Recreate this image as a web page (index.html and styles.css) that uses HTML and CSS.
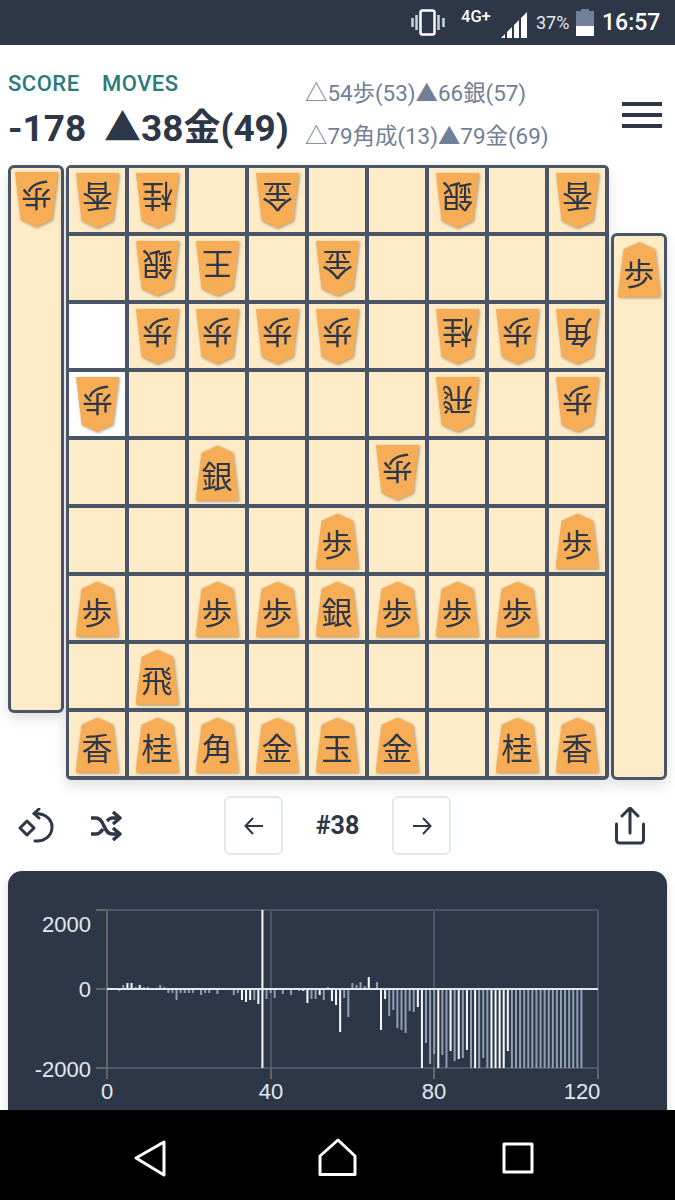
FILE: index.html
```html
<!DOCTYPE html>
<html lang="ja">
<head>
<meta charset="utf-8">
<title>Shogi</title>
<link rel="stylesheet" href="styles.css">
</head>
<body>
<div class="screen">
  <div class="status">
    <svg class="ic-vib" width="36" height="28" viewBox="0 0 36 28"><rect x="9.5" y="1.5" width="14" height="24" rx="2" fill="none" stroke="#fff" stroke-width="2.5"/><path d="M1.5 9v9M5.5 6v15M27.5 6v15M32.5 9v9" stroke="#cbd5e0" stroke-width="2.5" fill="none"/></svg>
    <span class="net">4G+</span>
    <svg class="ic-sig" width="26" height="26" viewBox="0 0 26 26"><path d="M0 26l4-4v4zM6 20l5-5v11H6zM13 13l5-5v18h-5zM20 6l6-6v26h-6z" fill="#fff"/></svg>
    <span class="pct">37%</span>
    <svg class="ic-bat" width="18" height="27" viewBox="0 0 18 27"><path d="M5 0h8v2h5v25H0V2h5z" fill="#718096"/><rect y="17" width="18" height="10" fill="#fff"/></svg>
    <span class="clock">16:57</span>
  </div>

  <main class="main">
    <header class="head">
      <div class="summary">
        <span class="label">SCORE</span>
        <span class="label">MOVES</span>
        <span class="big">-178</span>
        <span class="big big-move">▲38金(49)</span>
      </div>
      <div class="alts">
        <div>△54歩(53)▲66銀(57)</div>
        <div>△79角成(13)▲79金(69)</div>
      </div>
      <svg class="menu" width="40" height="28" viewBox="0 0 40 28"><path d="M0 3h40M0 14h40M0 25h40" stroke="#2d3748" stroke-width="4"/></svg>
    </header>

    <section class="play">
      <div class="stand stand-l"><div class="sp"><b class="p g">歩</b></div></div>
      <div class="board">
        <div class="c"><div class="sp"><b class="p g">香</b></div></div><div class="c"><div class="sp"><b class="p g">桂</b></div></div><div class="c"></div><div class="c"><div class="sp"><b class="p g">金</b></div></div><div class="c"></div><div class="c"></div><div class="c"><div class="sp"><b class="p g">銀</b></div></div><div class="c"></div><div class="c"><div class="sp"><b class="p g">香</b></div></div>

        <div class="c"></div><div class="c"><div class="sp"><b class="p g">銀</b></div></div><div class="c"><div class="sp"><b class="p g">王</b></div></div><div class="c"></div><div class="c"><div class="sp"><b class="p g">金</b></div></div><div class="c"></div><div class="c"></div><div class="c"></div><div class="c"></div>

        <div class="c w"></div><div class="c"><div class="sp"><b class="p g">歩</b></div></div><div class="c"><div class="sp"><b class="p g">歩</b></div></div><div class="c"><div class="sp"><b class="p g">歩</b></div></div><div class="c"><div class="sp"><b class="p g">歩</b></div></div><div class="c"></div><div class="c"><div class="sp"><b class="p g">桂</b></div></div><div class="c"><div class="sp"><b class="p g">歩</b></div></div><div class="c"><div class="sp"><b class="p g">角</b></div></div>

        <div class="c w"><div class="sp"><b class="p g">歩</b></div></div><div class="c"></div><div class="c"></div><div class="c"></div><div class="c"></div><div class="c"></div><div class="c"><div class="sp"><b class="p g">飛</b></div></div><div class="c"></div><div class="c"><div class="sp"><b class="p g">歩</b></div></div>

        <div class="c"></div><div class="c"></div><div class="c"><div class="sp"><b class="p">銀</b></div></div><div class="c"></div><div class="c"></div><div class="c"><div class="sp"><b class="p g">歩</b></div></div><div class="c"></div><div class="c"></div><div class="c"></div>

        <div class="c"></div><div class="c"></div><div class="c"></div><div class="c"></div><div class="c"><div class="sp"><b class="p">歩</b></div></div><div class="c"></div><div class="c"></div><div class="c"></div><div class="c"><div class="sp"><b class="p">歩</b></div></div>

        <div class="c"><div class="sp"><b class="p">歩</b></div></div><div class="c"></div><div class="c"><div class="sp"><b class="p">歩</b></div></div><div class="c"><div class="sp"><b class="p">歩</b></div></div><div class="c"><div class="sp"><b class="p">銀</b></div></div><div class="c"><div class="sp"><b class="p">歩</b></div></div><div class="c"><div class="sp"><b class="p">歩</b></div></div><div class="c"><div class="sp"><b class="p">歩</b></div></div><div class="c"></div>

        <div class="c"></div><div class="c"><div class="sp"><b class="p">飛</b></div></div><div class="c"></div><div class="c"></div><div class="c"></div><div class="c"></div><div class="c"></div><div class="c"></div><div class="c"></div>

        <div class="c"><div class="sp"><b class="p">香</b></div></div><div class="c"><div class="sp"><b class="p">桂</b></div></div><div class="c"><div class="sp"><b class="p">角</b></div></div><div class="c"><div class="sp"><b class="p">金</b></div></div><div class="c"><div class="sp"><b class="p">玉</b></div></div><div class="c"><div class="sp"><b class="p">金</b></div></div><div class="c"></div><div class="c"><div class="sp"><b class="p">桂</b></div></div><div class="c"><div class="sp"><b class="p">香</b></div></div>
      </div>
      <div class="stand stand-r"><div class="sp"><b class="p">歩</b></div></div>
    </section>

    <nav class="controls">
      <div class="tools">
        <svg width="36" height="36" viewBox="18 808 36 36" fill="none" stroke="#2d3748" stroke-width="3" stroke-linecap="round" stroke-linejoin="round"><path d="M27 821l7 7-7 7-7-7z"/><path d="M34 813.500C46 813 52.500 820 52 828C51.500 836 44 842 35 841"/><path d="M39 809l-5 4.500 5 4.500"/></svg>
        <svg width="32" height="30" viewBox="0 0 32 30" fill="none" stroke="#2d3748" stroke-width="3.5" stroke-linejoin="round"><path d="M1 7h5c4 0 6 3 8 8s4 8 8 8h7"/><path d="M1 23h5c3 0 5-2 7-5M17 10c2-2 3-3 5-3h7"/><path d="M23 1l7 6-7 6M23 17l7 6-7 6"/></svg>
      </div>
      <div class="pager">
        <button class="btn" type="button"><svg width="20" height="18" viewBox="0 0 20 18" fill="none" stroke="#2d3748" stroke-width="2"><path d="M19 9H2M9 1L1.500 9 9 17"/></svg></button>
        <span class="num">#38</span>
        <button class="btn" type="button"><svg width="20" height="18" viewBox="0 0 20 18" fill="none" stroke="#2d3748" stroke-width="2"><path d="M1 9h17M11 1l7.500 8-7.500 8"/></svg></button>
      </div>
      <div class="share">
        <svg width="32" height="38" viewBox="0 0 32 38" fill="none" stroke="#2d3748" stroke-width="3" stroke-linecap="round" stroke-linejoin="round"><path d="M2.500 17v16a3 3 0 0 0 3 3h21a3 3 0 0 0 3-3V17M16 26V2M8 9l8-8 8 8"/></svg>
      </div>
    </nav>

    <section class="card">
      <svg id="chart" class="chart" width="659" height="260" viewBox="8 871 659 260">
        <g class="grid">
          <path d="M107 910H598M107 1068H598M271 910V1068M434 910V1068M598 910V1068"/>
        </g>
        <g class="axis">
          <path d="M96 910H107M96 989H107M96 1068H107M107 910V1079M271 1068V1079M434 1068V1079M598 1068V1079"/>
        </g>
        <g id="bars"></g>
        <path class="zero" d="M107 989H598"/>
        <g class="ticks">
          <text class="end" x="91" y="932">2000</text>
          <text class="end" x="91" y="997">0</text>
          <text class="end" x="91" y="1077">-2000</text>
          <text class="mid" x="107" y="1099">0</text>
          <text class="mid" x="271" y="1099">40</text>
          <text class="mid" x="434" y="1099">80</text>
          <text class="mid" x="582" y="1099">120</text>
        </g>
      </svg>
    </section>
  </main>

  <div class="android">
    <svg width="675" height="90" viewBox="0 1110 675 90" fill="none" stroke="#fff" stroke-width="3" stroke-linejoin="round"><path d="M136 1158l28-16v33z"/><path d="M338 1140l17 16v18.500h-35V1156z"/><rect x="504" y="1144" width="28" height="28"/></svg>
  </div>
</div>
<script src="chart.js"></script>
</body>
</html>
```

FILE: styles.css
```css
* { box-sizing: border-box; }
html, body { margin: 0; padding: 0; background: #fff; }
body { font-family: Roboto, "Noto Sans CJK JP", sans-serif; color: #2d3748; }

.screen { width: 675px; height: 1200px; display: flex; flex-direction: column; overflow: hidden; }

.status { height: 45px; flex: none; background: #2d3748; color: #fff; display: flex; align-items: center; padding-left: 411px; }
.ic-vib { flex: none; }
.net { font-size: 16.500px; font-weight: 500; margin: -13px 0 0 14px; width: 40px; white-space: nowrap; }
.ic-sig { flex: none; margin: 4px 0 0 0; }
.pct { font-size: 18px; margin: 0 0 0 9px; color: #e2e8f0; width: 40px; }
.ic-bat { flex: none; margin: 0 0 0 0; }
.clock { font-size: 23px; font-weight: 500; margin-left: 8px; }

.main { flex: 1; min-height: 0; overflow: hidden; display: flex; flex-direction: column; }

.head { height: 120px; flex: none; display: flex; padding: 0 13px 0 8px; }
.summary { display: grid; grid-template-columns: 94px auto; grid-template-rows: auto auto; align-content: start; padding-top: 26px; width: 297px; flex: none; }
.label { font-size: 22px; font-weight: 500; color: #2c7a7b; line-height: 26px; letter-spacing: .5px; }
.big { font-size: 37px; font-weight: 700; line-height: 64px; white-space: nowrap; }
.big-move { margin-left: 2px; }
.alts { font-size: 22.400px; color: #718096; line-height: 43px; padding-top: 27px; white-space: nowrap; flex: 1; }
.menu { flex: none; margin-top: 56px; }

.play { display: flex; align-items: flex-start; gap: 2px; padding: 0 8px; flex: none; }
.board { width: 543px; height: 615px; flex: none; display: grid; grid-template-columns: repeat(9, 56px); grid-template-rows: repeat(9, 64px); gap: 4px; background: #4a5568; border: 3px solid #4a5568; border-radius: 5px; box-shadow: 0 6px 14px rgba(0,0,0,.12); }
.c { background: #feebc8; display: flex; align-items: center; justify-content: center; }
.c.w { background: #fff; }
.stand { width: 56px; flex: none; background: #feebc8; border: 3px solid #4a5568; border-radius: 6px; display: flex; justify-content: center; padding-top: 4px; box-shadow: 0 6px 14px rgba(0,0,0,.12); }
.stand-l { height: 548px; }
.stand-r { height: 547px; margin-top: 68px; }

.sp { filter: drop-shadow(1.500px 1.500px 1.500px rgba(60,50,20,.45)); line-height: 0; }
.p { display: flex; align-items: center; justify-content: center; width: 43px; height: 55px; margin-top: 2px; padding-top: 3px; background: #f6ad55; clip-path: polygon(51% 0, 87% 13%, 100% 100%, 0 100%, 14% 13%); font-family: "Noto Sans CJK JP", sans-serif; font-weight: 400; font-size: 31px; line-height: 1; color: #2d3748; }
.p.g { margin-top: 0; transform: rotate(180deg); }

.controls { height: 91px; flex: none; display: grid; grid-template-columns: 1fr auto 1fr; align-items: center; padding-top: 0; }
.tools { display: flex; align-items: center; gap: 36px; padding-left: 18px; }
.pager { display: flex; align-items: center; }
.btn { width: 59px; height: 59px; padding: 0; background: #fff; border: 2px solid #e2e8f0; border-radius: 6px; display: flex; align-items: center; justify-content: center; }
.num { width: 109px; text-align: center; font-size: 25px; font-weight: 700; }
.share { display: flex; justify-content: flex-end; padding-right: 29px; }

.card { margin: 0 8px; height: 260px; flex: none; background: #2d3748; border-radius: 14px; box-shadow: 0 4px 10px rgba(0,0,0,.15); }
.chart { display: block; }
.grid path { stroke: #4a5568; stroke-width: 2; fill: none; }
.axis path { stroke: #666; stroke-width: 2; fill: none; }
.zero { stroke: #e2e8f0; stroke-width: 2; fill: none; }
.ticks text { font-family: "Liberation Sans", Arial, sans-serif; font-size: 22px; fill: #e2e8f0; }
.ticks .end { text-anchor: end; }
.ticks .mid { text-anchor: middle; }

.android { height: 90px; flex: none; background: #000; }
.android svg { display: block; }
```

FILE: chart.js
```js
// Evaluation per move, in pixels below (+) or above (-) the zero line.
var values = [0,0,1,2,-4,-6,-6,-2,-4,-2,-2,0,-1,-4,-2,4,4,11,4,4,4,4,-1,6,4,4,1,5,1,-1,0,6,4,11,13,11,11,15,2,10,4,9,0,5,0,6,0,2,2,14,10,10,6,11,-2,12,16,43,9,28,-6,-4,-7,-3,-12,0,-7,41,10,27,21,39,41,44,22,23,18,79,54,75,65,79,66,79,62,72,70,69,61,79,79,79,69,79,79,79,79,79,62,79,79,79,79,79,79,79,79,79,79,79,79,79,79,79,79,79,79];
var bright = [5,6,8,33,34,35,37,48,49,52,55,56,57,64,67,68,76,77,81,84,86,88,90,94,95,96,97,98];
var NS = "http://www.w3.org/2000/svg";
var bars = document.getElementById("bars");

function addBar(n, y, h, w, color) {
  var r = document.createElementNS(NS, "rect");
  r.setAttribute("x", 107 + 4.09 * n - w / 2);
  r.setAttribute("y", y);
  r.setAttribute("width", w);
  r.setAttribute("height", h);
  r.setAttribute("fill", color);
  bars.appendChild(r);
}

values.forEach(function (v, n) {
  if (v === 0) return;
  var color = bright.indexOf(n) >= 0 ? "#f7fafc" : "#8fa0b5";
  addBar(n, v > 0 ? 989 : 989 + v, Math.abs(v), 2, color);
});
addBar(38, 910, 158, 2, "#f7fafc");
```
